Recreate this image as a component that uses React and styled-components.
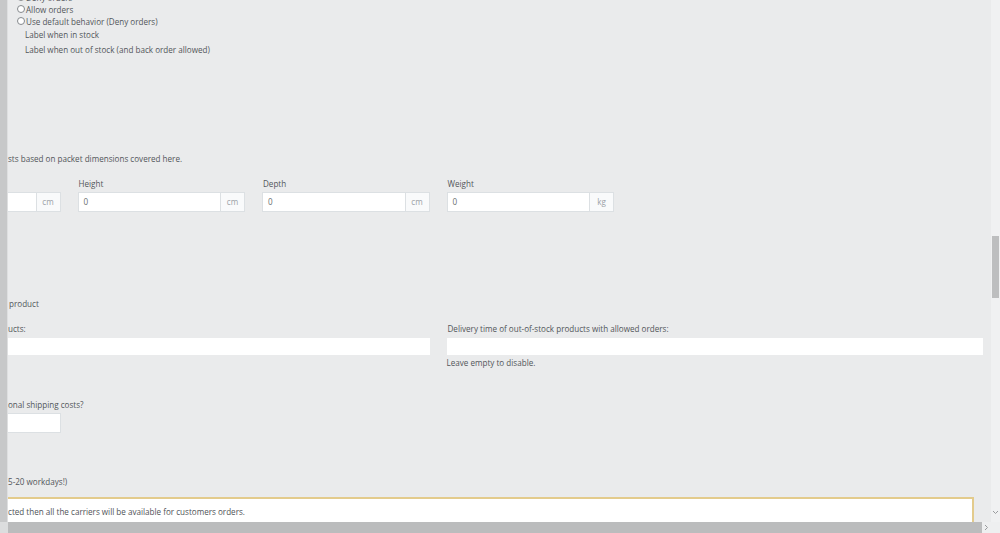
import React from 'react';
import styled, { createGlobalStyle } from 'styled-components';

const GlobalStyle = createGlobalStyle`
  html, body {
    margin: 0;
    padding: 0;
    overflow: hidden;
    background: #eaebec;
  }
  body {
    font-family: 'Open Sans', 'Liberation Sans', sans-serif;
  }
`;

const Screen = styled.div`
  width: 1000px;
  height: 533px;
  display: grid;
  grid-template-columns: 991px 9px;
  grid-template-rows: 522px 11px;
  background: #eaebec;
  overflow: hidden;
`;

const Main = styled.div`
  display: flex;
  min-width: 0;
  overflow: hidden;
`;

const SideStrip = styled.div`
  flex: 0 0 7px;
  background: #c7c8c9;
  border-right: 1px solid #dedfe0;
`;

const Viewport = styled.div`
  flex: 1;
  min-width: 0;
  overflow: hidden;
`;

/* page is scrolled sideways, the form's left edge sits under the strip */
const Content = styled.div`
  width: 1090px;
  margin-left: -115px;
  font-size: 8.1px;
  color: #52565a;
`;

const Line = styled.div`
  height: 12px;
  line-height: 14px;
  white-space: nowrap;
  margin-top: ${(p) => p.$top || 0}px;
  padding-left: ${(p) => p.$indent || 0}px;
`;

const RadioList = styled.div`
  margin-top: -9px;
  padding-left: 124px;
`;

const RadioRow = styled.label`
  display: flex;
  align-items: center;
  height: 12px;
  white-space: nowrap;
`;

const Radio = styled.span`
  width: 6px;
  height: 6px;
  border: 1px solid #85898d;
  border-radius: 50%;
  background: #fff;
  margin-right: 1px;
`;

const DimensionGrid = styled.div`
  display: grid;
  grid-template-columns: repeat(4, 167.5px);
  column-gap: 17px;
  margin-top: 13px;
`;

const Field = styled.div`
  display: flex;
  flex-direction: column;
`;

const FieldLabel = styled.div`
  height: 12px;
  line-height: 14px;
  white-space: nowrap;
  padding-left: ${(p) => p.$indent || 0}px;
  margin-bottom: ${(p) => p.$gap || 3}px;
`;

const AddonInput = styled.div`
  display: flex;
  height: 20px;
  box-sizing: border-box;
  border: 1px solid #dce0e3;
  background: #fff;
`;

const InputText = styled.div`
  flex: 1;
  padding-left: 5px;
  line-height: 18px;
  color: #6a6e72;
`;

const Addon = styled.div`
  flex: 0 0 23px;
  border-left: 1px solid #dce0e3;
  background: #f9fafb;
  color: #9ba1a6;
  text-align: center;
  line-height: 18px;
`;

const DeliveryGrid = styled.div`
  display: grid;
  grid-template-columns: 536.5px 536.5px;
  column-gap: 17px;
  margin-top: 13px;
  align-items: start;
`;

const PlainInput = styled.div`
  height: 17px;
  background: #fff;
`;

const Help = styled.div`
  height: 12px;
  line-height: 14px;
  margin-top: 1px;
  white-space: nowrap;
`;

const SmallInput = styled.div`
  width: 167.5px;
  height: 20px;
  box-sizing: border-box;
  border: 1px solid #dce0e3;
  background: #fff;
  margin-top: 3px;
`;

const Alert = styled.div`
  margin-top: 10px;
  margin-right: 9px;
  height: 28px;
  box-sizing: border-box;
  border: 2px solid #e3cb8c;
  background: #fff;
  padding-left: 113px;
  line-height: 25px;
  white-space: nowrap;
  color: #4f5357;
`;

const VScroll = styled.div`
  grid-row: 1;
  grid-column: 2;
  background: #f0f1f2;
  display: flex;
  flex-direction: column;
  align-items: center;
`;

const VThumb = styled.div`
  width: 7px;
  height: 62px;
  margin-top: 236px;
  background: #bdbebf;
`;

const Arrow = styled.svg`
  margin-top: auto;
  margin-bottom: 7px;
  flex: none;
`;

const Corner = styled.div`
  grid-row: 2;
  grid-column: 2;
  background: #eeeff0;
`;

const HScroll = styled.div`
  grid-row: 2;
  grid-column: 1;
  display: flex;
  align-items: center;
  background: #e6e7e8;
`;

const HTrackStart = styled.div`
  width: 8px;
  height: 100%;
  background: #dcddde;
`;

const HThumb = styled.div`
  width: 974px;
  height: 100%;
  background: #bbbcbd;
`;

const HEnd = styled.div`
  flex: 1;
  height: 100%;
  display: flex;
  align-items: center;
  justify-content: center;
  background: #eeeff0;
`;

// the form is scrolled left; only the visible tail of each cut text is kept
const EDGE = 115;

const dimensions = [
  { label: '', value: '', unit: 'cm' },
  { label: 'Height', value: '0', unit: 'cm' },
  { label: 'Depth', value: '0', unit: 'cm' },
  { label: 'Weight', value: '0', unit: 'kg' },
];

export default function App() {
  return (
    <Screen>
      <GlobalStyle />
      <Main>
        <SideStrip />
        <Viewport>
          <Content>
            <RadioList>
              <RadioRow><Radio />Deny orders</RadioRow>
              <RadioRow><Radio />Allow orders</RadioRow>
              <RadioRow><Radio />Use default behavior (Deny orders)</RadioRow>
            </RadioList>
            <Line $top={1} $indent={132}>Label when in stock</Line>
            <Line $top={3} $indent={132}>Label when out of stock (and back order allowed)</Line>

            <Line $top={97} $indent={EDGE}>sts based on packet dimensions covered here.</Line>
            <DimensionGrid>
              {dimensions.map((d, i) => (
                <Field key={i}>
                  <FieldLabel $indent={1}>{d.label}</FieldLabel>
                  <AddonInput>
                    <InputText>{d.value}</InputText>
                    <Addon>{d.unit}</Addon>
                  </AddonInput>
                </Field>
              ))}
            </DimensionGrid>

            <Line $top={85} $indent={EDGE + 1}>product</Line>
            <DeliveryGrid>
              <Field>
                <FieldLabel $gap={4} $indent={EDGE}>ucts:</FieldLabel>
                <PlainInput />
              </Field>
              <Field>
                <FieldLabel $gap={4} $indent={1}>Delivery time of out-of-stock products with allowed orders:</FieldLabel>
                <PlainInput />
                <Help>Leave empty to disable.</Help>
              </Field>
            </DeliveryGrid>

            <Line $top={30} $indent={EDGE}>onal shipping costs?</Line>
            <SmallInput />

            <Line $top={42} $indent={EDGE}>5-20 workdays!)</Line>
            <Alert>cted then all the carriers will be available for customers orders.</Alert>
          </Content>
        </Viewport>
      </Main>
      <VScroll>
        <VThumb />
        <Arrow width="7" height="5" viewBox="0 0 7 5">
          <path d="M1 1 L3.5 3.5 L6 1" fill="none" stroke="#9a9c9e" strokeWidth="1" />
        </Arrow>
      </VScroll>
      <HScroll>
        <HTrackStart />
        <HThumb />
        <HEnd>
          <svg width="5" height="7" viewBox="0 0 5 7">
            <path d="M1 1 L3.5 3.5 L1 6" fill="none" stroke="#9a9c9e" strokeWidth="1" />
          </svg>
        </HEnd>
      </HScroll>
      <Corner />
    </Screen>
  );
}
